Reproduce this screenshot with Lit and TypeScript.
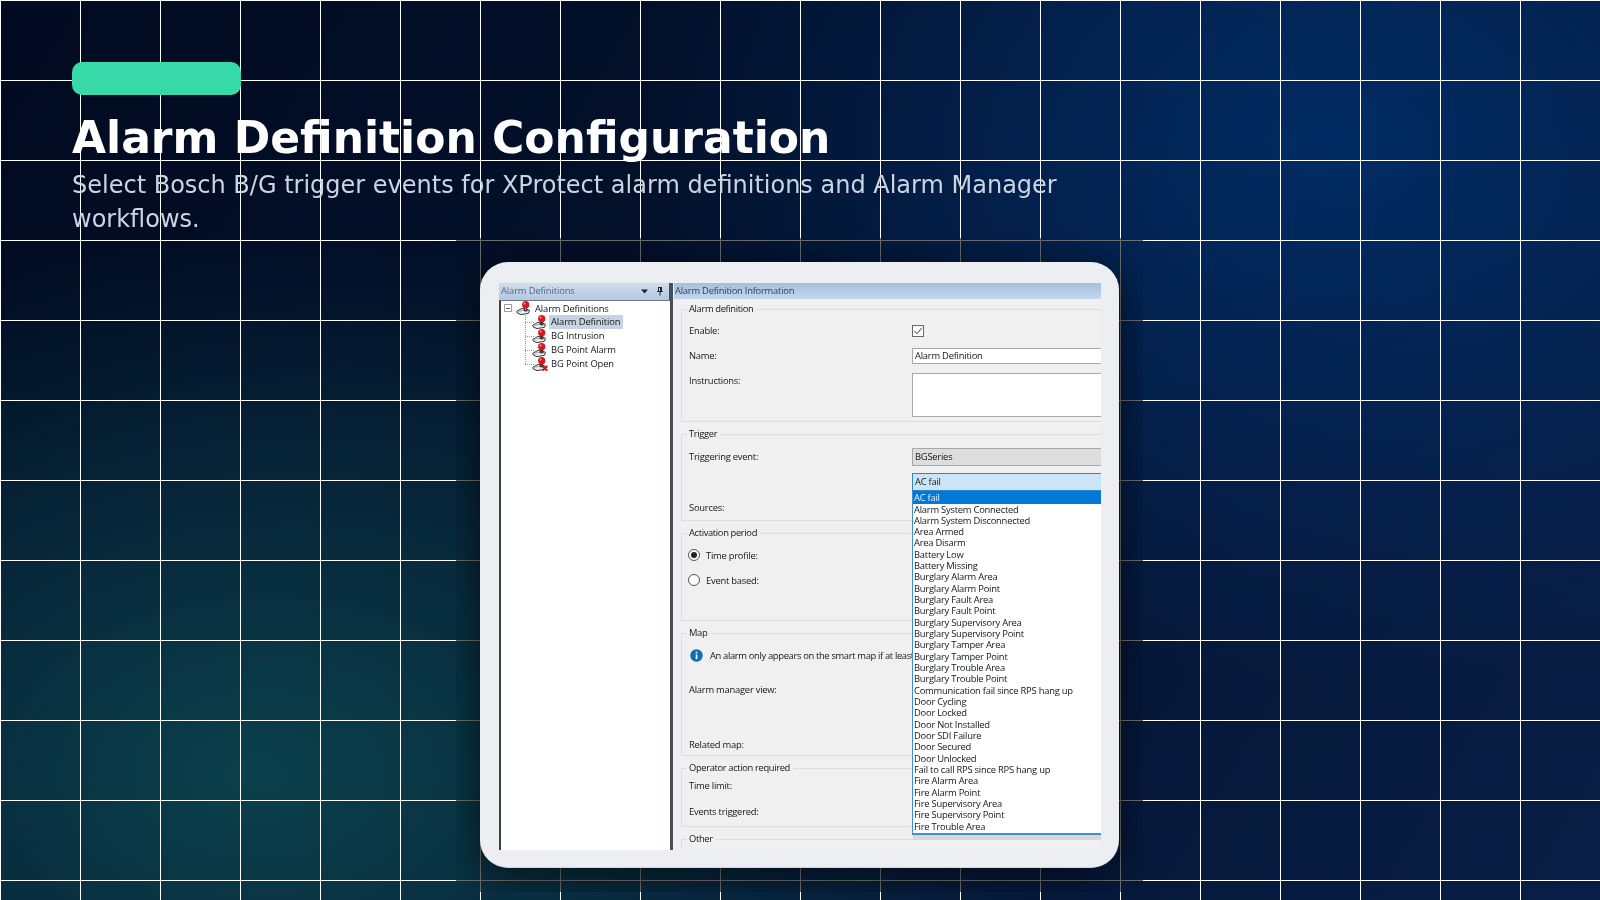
import { LitElement, html, css, svg } from "lit";
import { customElement } from "lit/decorators.js";

const EVENTS = [
  "Alarm System Connected", "Alarm System Disconnected", "Area Armed", "Area Disarm", "Battery Low",
  "Battery Missing", "Burglary Alarm Area", "Burglary Alarm Point", "Burglary Fault Area", "Burglary Fault Point",
  "Burglary Supervisory Area", "Burglary Supervisory Point", "Burglary Tamper Area", "Burglary Tamper Point",
  "Burglary Trouble Area", "Burglary Trouble Point", "Communication fail since RPS hang up", "Door Cycling",
  "Door Locked", "Door Not Installed", "Door SDI Failure", "Door Secured", "Door Unlocked",
  "Fail to call RPS since RPS hang up", "Fire Alarm Area", "Fire Alarm Point", "Fire Supervisory Area",
  "Fire Supervisory Point", "Fire Trouble Area",
];

const alarmIcon = (cross = false) => html`<svg class="alarm" viewBox="0 0 16 14" width="16" height="14">
  ${svg`<path d="M0.8 10.2 L6 7.4 L13.5 9.2 L12.5 12.3 L5 13.6 L1.2 12 Z" fill="#ececec" stroke="#3c3c3c" stroke-width="1"/>
  <path d="M2.5 11 L6 9.3 L11 10.4" fill="none" stroke="#888" stroke-width=".7"/>
  <path d="M7.6 10 L8 6 H11.2 L11.6 10.2 Z" fill="#3a3a3a"/>
  <circle cx="9.7" cy="3.7" r="3.6" fill="#e0121b"/>
  <circle cx="8.6" cy="2.6" r="1.1" fill="#ff8f8f"/>`}
  ${cross ? svg`<path d="M10.5 9 L15.3 13.6 M15.3 9 L10.5 13.6" stroke="#d4101a" stroke-width="2"/>` : ""}
</svg>`;

@customElement("app-root")
export class AppRoot extends LitElement {
  static styles = css`
    :host {
      display: flex;
      flex-direction: column;
      position: relative;
      width: 1600px;
      height: 900px;
      box-sizing: border-box;
      padding: 62px 72px 0;
      overflow: hidden;
      font-family: "DejaVu Sans", sans-serif;
      background:
        linear-gradient(#fff 1px, transparent 1px) 0 0 / 80px 80px,
        linear-gradient(90deg, #fff 1px, transparent 1px) 0 0 / 80px 80px,
        radial-gradient(ellipse 700px 540px at 84% 16%, rgba(0, 45, 102, 0.95), rgba(0, 45, 102, 0) 100%),
        radial-gradient(ellipse 800px 540px at 16% 86%, rgba(11, 64, 76, 1), rgba(11, 64, 76, 0) 100%),
        linear-gradient(120deg, #010a20 0%, #03122e 45%, #081e46 100%);
    }
    .pill { width: 169px; height: 33px; border-radius: 10px; background: #37d9a8; flex: none; }
    h1 { margin: 17px 0 0; font-size: 44px; line-height: 52px; font-weight: 700; color: #fff; }
    .sub { margin: 4px 0 0; width: 1000px; font-size: 24px; line-height: 34px; color: #cbd5e1; }
    .stage { position: relative; width: 639px; height: 606px; margin: 26px 0 0 408px; flex: none; }
    .stage::before {
      content: ""; position: absolute; inset: -24px;
      background: #707070; mix-blend-mode: darken;
    }
    .card {
      position: relative; box-sizing: border-box; height: 606px;
      padding: 20px 18px 18px 19px;
      background: #eceef1; border-bottom: 1px solid #d4d6d9; border-radius: 28px;
      box-shadow: 0 6px 42px rgba(0, 0, 0, 0.62);
      clip-path: inset(-24px);
    }
    .shot {
      display: flex; height: 568px; overflow: hidden; background: #f0f0f0;
      font-family: "Open Sans", sans-serif; font-size: 9.4px; letter-spacing: -0.23px; color: #141619;
      filter: blur(0.4px);
    }
    .left { width: 171px; flex: none; display: flex; flex-direction: column; letter-spacing: -0.12px; }
    .lhead {
      height: 18px; flex: none; display: flex; align-items: center; padding: 0 6px 2px 2px; gap: 7px;
      background: linear-gradient(#d0ddec, #b2c8e4); color: #55657c; box-sizing: border-box;
      border-top: 1px solid #e4e9f0;
    }
    .lhead span { flex: 1; }
    .tree {
      flex: 1; background: #fff; border-left: 2px solid #3c3f44; border-top: 1px solid #6e7680;
      position: relative;
    }
    .node { display: flex; align-items: center; height: 14px; }
    .root { padding-left: 3px; }
    .exp {
      box-sizing: border-box; width: 8px; height: 8px; border: 1px solid #a0a0a0; margin-right: 4px;
      display: flex; align-items: center; justify-content: center; flex: none;
    }
    .exp::before { content: ""; width: 4px; height: 1px; background: #666; }
    .root .alarm { margin-right: 3px; }
    .child { padding-left: 24px; position: relative; }
    .child::before {
      content: ""; position: absolute; left: 24px; top: 7px; width: 9px; border-top: 1px dotted #9a9a9a;
    }
    .child::after {
      content: ""; position: absolute; left: 24px; top: -7px; height: 14px; border-left: 1px dotted #9a9a9a;
    }
    .child .alarm { margin: 0 1px 0 7px; position: relative; z-index: 1; }
    .child span { padding: 0 3px 0 2px; line-height: 14px; }
    .sel { background: #c5d3e2; }
    .split { width: 4px; flex: none; background: #4a4f55; margin-left: -1px; margin-top: 1px; }
    .right { flex: 1; min-width: 0; margin-left: 1px; display: flex; flex-direction: column; gap: 12px; }
    .rhead {
      height: 16px; flex: none; margin: 1px 0 -2px; display: flex; align-items: center; padding: 0 0 2px 1px;
      background: linear-gradient(#a6bfdd, #c3d6ee); color: #2f3f55; box-sizing: border-box;
    }
    .group {
      box-sizing: border-box; flex: none; margin-right: -20px; margin-left: 7px;
      border: 1px solid #dddddd; padding-left: 7px; display: flex; flex-direction: column;
    }
    .g1 { height: 113px; } .g2 { height: 87px; } .g3 { height: 88px; } .g4 { height: 123px; }
    .g5 { height: 59px; } .g6 { height: 60px; }
    .legend {
      height: 12px; line-height: 12px; margin: -7.5px 0 0 -2px; padding: 0 3px 0 2px; width: fit-content;
      background: #f0f0f0; flex: none; letter-spacing: -0.36px;
    }
    .row { display: flex; align-items: center; min-height: 16px; flex: none; }
    .lab { width: 223px; flex: none; margin-top: -1px; }
    .top .lab { margin-top: 1px; }
    .m4 { margin-top: 4px; } .m7 { margin-top: 7px; } .m8 { margin-top: 8px; } .m9 { margin-top: 9px; }
    .m39 { margin-top: 39px; }
    .m8h { margin-top: 8.5px; } .m9h { margin-top: 9.5px; } .m18h { margin-top: 18.5px; }
    .top { align-items: flex-start; }
    .check {
      width: 12px; height: 12px; box-sizing: border-box; background: #fbfbfb; border: 1px solid #6a6a6a;
    }
    .input {
      flex: 1; box-sizing: border-box; height: 16px; background: #fff; border: 1px solid #a8a8a8;
      padding-left: 2px; line-height: 14px;
    }
    .area { height: 44px; }
    .ro { height: 18px; background: #dddddd; line-height: 16px; }
    .combo {
      flex: 1; position: relative; box-sizing: border-box; height: 18px; background: #cce4f7;
      border: 1px solid #2f84cc; padding-left: 2px; line-height: 16px;
    }
    .list {
      position: absolute; left: -1px; right: -1px; top: 17px; height: 344px; box-sizing: border-box;
      background: #fff; border: 1px solid #3c8fd6; border-bottom-width: 2px; border-top: 0;
      box-shadow: 1px 4px 1px rgba(0, 0, 0, 0.1); z-index: 3; padding-left: 1px; line-height: 11.33px;
    }
    .item { height: 11.33px; white-space: nowrap; }
    .cur {
      height: 13px; line-height: 13px; margin: 0 0 0 -1px; padding-left: 1px; background: #0078d7; color: #eaf3fb;
    }
    .radio {
      box-sizing: border-box; width: 12px; height: 12px; border-radius: 50%; border: 1px solid #555; background: #fbfbfb;
      margin: 0 6px 0 -1px; display: flex; align-items: center; justify-content: center; flex: none;
    }
    .radio.on::before { content: ""; width: 6px; height: 6px; border-radius: 50%; background: #222; }
    .info { width: 13px; height: 13px; margin: 0 7px 0 1px; flex: none; }
    .note { letter-spacing: -0.34px; white-space: nowrap; }
    .ctl { width: 2px; height: 17px; background: #555; }
  `;

  render() {
    return html`
      <div class="pill"></div>
      <h1>Alarm Definition Configuration</h1>
      <p class="sub">Select Bosch B/G trigger events for XProtect alarm definitions and Alarm Manager workflows.</p>
      <div class="stage">
        <div class="card">
          <div class="shot">
            <div class="left">
              <div class="lhead">
                <span>Alarm Definitions</span>
                <svg width="9" height="9" viewBox="0 0 9 9"><path d="M1 3.5 H8 L4.5 7.5 Z" fill="#1e2530"/></svg>
                <svg width="8" height="10" viewBox="0 0 8 10"><path d="M2 1 H6 V5 H7 V6 H4.5 V9.5 H3.5 V6 H1 V5 H2 Z M3 2 V5 H4 V2 Z" fill="#1e2530"/></svg>
              </div>
              <div class="tree">
                <div class="node root"><i class="exp"></i>${alarmIcon()}<span>Alarm Definitions</span></div>
                <div class="node child">${alarmIcon()}<span class="sel">Alarm Definition</span></div>
                <div class="node child">${alarmIcon()}<span>BG Intrusion</span></div>
                <div class="node child">${alarmIcon()}<span>BG Point Alarm</span></div>
                <div class="node child">${alarmIcon(true)}<span>BG Point Open</span></div>
              </div>
            </div>
            <div class="split"></div>
            <div class="right">
              <div class="rhead">Alarm Definition Information</div>
              <div class="group g1">
                <div class="legend">Alarm definition</div>
                <div class="row m8"><div class="lab">Enable:</div>
                  <svg class="check" viewBox="0 0 10 10"><path d="M1.5 5 L4 7.8 L8.8 1.8" fill="none" stroke="#444" stroke-width="1"/></svg>
                </div>
                <div class="row m9"><div class="lab">Name:</div><div class="input">Alarm Definition</div></div>
                <div class="row m9 top"><div class="lab">Instructions:</div><div class="input area"></div></div>
              </div>
              <div class="group g2">
                <div class="legend">Trigger</div>
                <div class="row m8"><div class="lab">Triggering event:</div><div class="input ro">BGSeries</div></div>
                <div class="row m7"><div class="lab"></div>
                  <div class="combo">AC fail
                    <div class="list">
                      <div class="cur">AC fail</div>
                      ${EVENTS.map((e) => html`<div class="item">${e}</div>`)}
                    </div>
                  </div>
                </div>
                <div class="row m9"><div class="lab">Sources:</div></div>
              </div>
              <div class="group g3">
                <div class="legend">Activation period</div>
                <div class="row m8h"><i class="radio on"></i>Time profile:</div>
                <div class="row m9"><i class="radio"></i>Event based:</div>
              </div>
              <div class="group g4">
                <div class="legend">Map</div>
                <div class="row m8h note">
                  <svg class="info" viewBox="0 0 13 13"><circle cx="6.5" cy="6.5" r="6.2" fill="#0b6db3"/><rect x="5.7" y="5.4" width="1.7" height="4.8" fill="#fff"/><rect x="5.7" y="2.7" width="1.7" height="1.7" fill="#fff"/></svg>
                  An alarm only appears on the smart map if at least
                </div>
                <div class="row m18h"><div class="lab">Alarm manager view:</div></div>
                <div class="row m39"><div class="lab">Related map:</div></div>
              </div>
              <div class="group g5">
                <div class="legend">Operator action required</div>
                <div class="row m4"><div class="lab">Time limit:</div></div>
                <div class="row m9h"><div class="lab">Events triggered:</div><div class="ctl"></div></div>
              </div>
              <div class="group g6"><div class="legend">Other</div></div>
            </div>
          </div>
        </div>
      </div>
    `;
  }
}
